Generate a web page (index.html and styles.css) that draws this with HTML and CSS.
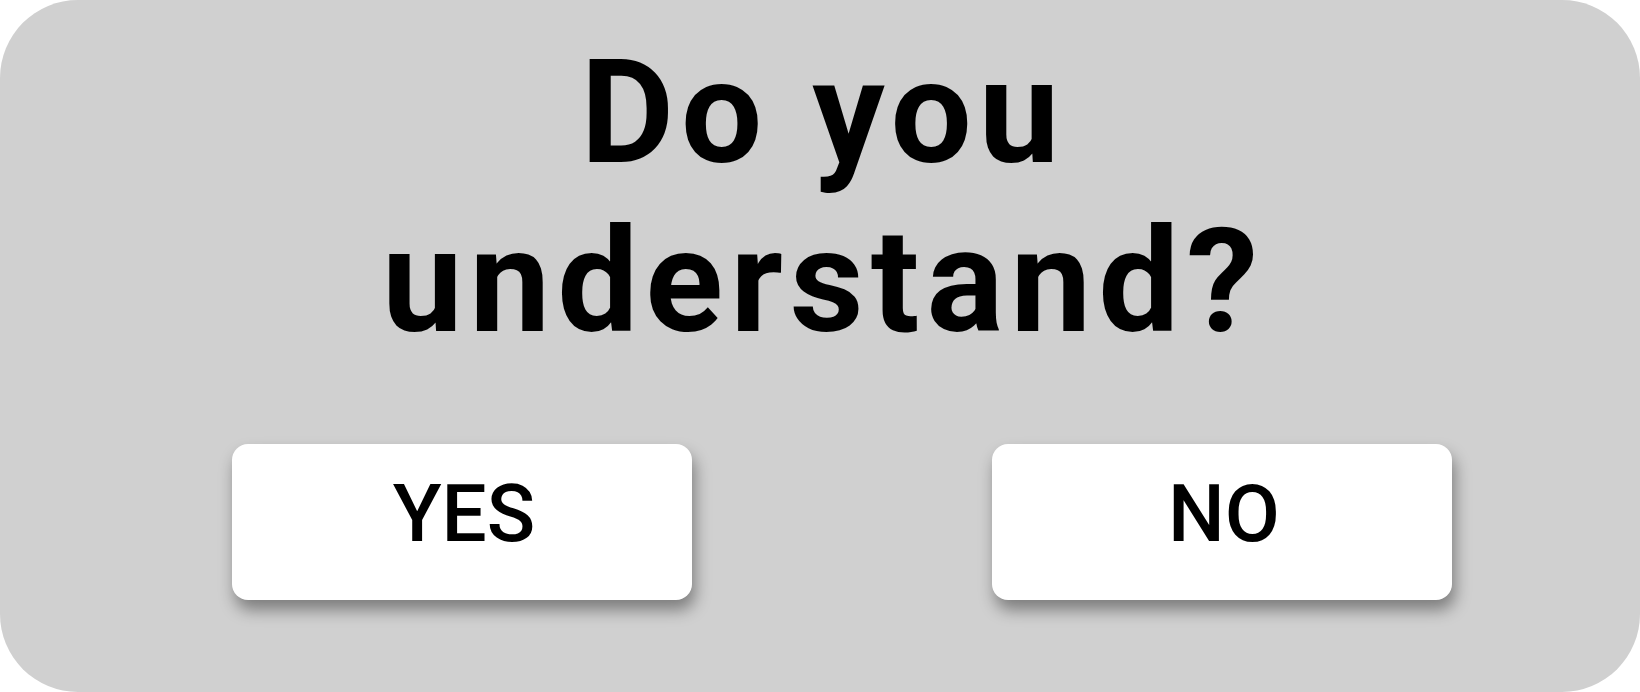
FILE: index.html
```html
<!DOCTYPE html>
<html lang="en">
<head>
<meta charset="utf-8">
<title>Do you understand?</title>
<link rel="stylesheet" href="styles.css">
</head>
<body>
<div class="panel">
  <h1 class="question">Do you understand?</h1>
  <div class="actions">
    <button class="btn">YES</button>
    <button class="btn">NO</button>
  </div>
</div>
</body>
</html>
```

FILE: styles.css
```css
html, body {
  margin: 0;
  padding: 0;
  background: #ffffff;
}
body {
  width: 1640px;
  height: 692px;
  overflow: hidden;
  font-family: Roboto, "Liberation Sans", sans-serif;
}
.panel {
  box-sizing: border-box;
  width: 1640px;
  height: 692px;
  background: #d0d0d0;
  border-radius: 78px;
  padding-top: 28px;
  display: flex;
  flex-direction: column;
  align-items: center;
}
.question {
  margin: 0;
  padding-left: 7px;
  max-width: 1100px;
  font-size: 144px;
  font-weight: 700;
  line-height: normal;
  letter-spacing: 7px;
  text-align: center;
  color: #000;
}
.actions {
  align-self: stretch;
  display: flex;
  gap: 300px;
  padding-left: 232px;
  margin-top: 78px;
}
.btn {
  box-sizing: border-box;
  width: 460px;
  height: 156px;
  padding: 23px 0 0 4px;
  display: flex;
  justify-content: center;
  align-items: flex-start;
  background: #ffffff;
  border: none;
  border-radius: 16px;
  box-shadow: 3px 10px 16px rgba(0, 0, 0, 0.4);
  font-family: Roboto, "Liberation Sans", sans-serif;
  font-size: 80px;
  font-weight: 500;
  line-height: normal;
  color: #000;
}
```
